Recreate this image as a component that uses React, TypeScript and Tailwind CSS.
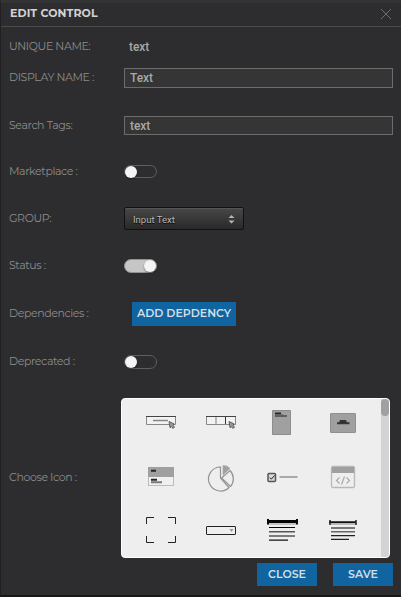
import React from "react";

const ui = "font-['Montserrat','Inter',sans-serif]";

function Row({ label, lift = "pb-px", height, children }: { label: string; lift?: string; height: string; children: React.ReactNode }) {
  return (
    <div className={`flex items-center ${height}`}>
      <div className={`w-[115px] shrink-0 whitespace-nowrap text-[11px] leading-4 font-normal tracking-[-0.4px] text-[#8c8c8c] ${lift}`}>{label}</div>
      {children}
    </div>
  );
}

function Toggle({ on = false, height = "h-[13px]" }: { on?: boolean; height?: string }) {
  return (
    <button
      className={`flex w-[33px] items-center rounded-full border ${height} ${on ? "justify-end border-[#929292] bg-[#c6c6c6]" : "border-[#5f5f61]"}`}
    >
      <span className="size-3 shrink-0 rounded-full bg-[#f4f4f4] shadow-[0_1px_2px_rgba(0,0,0,0.4)]" />
    </button>
  );
}

function TextInput({ value, height }: { value: string; height: string }) {
  return (
    <div className={`flex w-[269px] items-center border border-[#6c6c6c] bg-[#353535] pl-[5px] font-['Roboto',sans-serif] text-[12px] font-medium tracking-[-0.1px] text-[#a8a8a8] ${height}`}>
      {value}
    </div>
  );
}

function Pointer({ x, y }: { x: number; y: number }) {
  return <path transform={`translate(${x} ${y})`} d="M0 0L5 2.3L4 3.6L5.5 5.5L4 7L2.5 5.2L1 6.2Z" fill="#999" stroke="#4a4a4a" strokeWidth=".8" />;
}

const icons: React.ReactNode[] = [
  <>
    <path d="M1.5 8.5h29v8h-29z" fill="#f2f2f2" stroke="#888" />
    <path d="M1 8.5h30" stroke="#444" />
    <path d="M8 12.500h15" stroke="#888" strokeWidth="1.500" />
    <Pointer x={24} y={13.5} />
  </>,
  <>
    <path d="M1.5 8.5h29v8h-29z" fill="#f2f2f2" stroke="#888" />
    <path d="M1 8.5h30" stroke="#444" />
    <path d="M11 9v7" stroke="#999" strokeWidth="1.3" />
    <path d="M20.500 9v7" stroke="#333" />
    <Pointer x={24} y={13.5} />
  </>,
  <>
    <path d="M4.5 2.500h18v24h-18z" fill="#a0a0a0" stroke="#8d8d8d" />
    <path d="M7 4.500h6v2H7z" fill="#252525" />
    <path d="M7 8h12" stroke="#484848" strokeWidth="1.500" />
    <path d="M8 6.800h7" stroke="#666" />
  </>,
  <>
    <rect x="2.500" y="5.500" width="25" height="19" rx=".5" fill="#a0a0a0" stroke="#8f8f8f" />
    <path d="M12 12h6l1 2.300h2.500v2H9v-2h2z" fill="#343434" />
  </>,
  <>
    <rect x="3.500" y="7.500" width="25" height="18" fill="#f0f0f0" stroke="#bbb" />
    <path d="M3 7h26v10H3z" fill="#a0a0a0" />
    <path d="M6 10.800h5" stroke="#252525" strokeWidth="2" />
    <path d="M6 19.800h6" stroke="#252525" strokeWidth="2" />
    <path d="M6 22.300h11" stroke="#777" strokeWidth="2" />
  </>,
  <>
    <path d="M15.500 7A12 12 0 1 0 24 27.500L15.500 18z" fill="#eee" stroke="#939393" strokeWidth="1.200" />
    <path d="M16.500 18L25 10.500A12 12 0 0 1 25.500 26.500z" fill="#eee" stroke="#939393" strokeWidth="1.200" />
    <path d="M18 5.500Q22 5 25 8.500L18 15z" fill="#a0a0a0" stroke="#aaa" strokeWidth=".7" />
  </>,
  <>
    <rect x="0" y="13.500" width="7.500" height="8" rx="1" fill="#d8d8d8" stroke="#555" strokeWidth="1.500" />
    <path d="M1.800 17.500l1.500 1.700 3.200-3.700" fill="none" stroke="#222" />
    <path d="M11.500 17h18" stroke="#a8a8a8" strokeWidth="2" />
  </>,
  <>
    <rect x="3.500" y="6.500" width="23" height="21" rx="1.500" fill="#eee" stroke="#b8b8b8" strokeWidth="1.300" />
    <path d="M4 7h22v6H4z" fill="#9f9f9f" />
    <path d="M11.500 17.500l-3 3 3 3M18.500 17.500l3 3-3 3M16.500 16.500l-3 8" fill="none" stroke="#aaa" strokeWidth="1.200" />
  </>,
  <>
    <path d="M9 2.500H1.500V9M23 2.500h7.500V9M1.500 21v6.500H9M30.500 21v6.500H23" fill="none" stroke="#222" />
  </>,
  <>
    <rect x="1.500" y="11.500" width="29" height="8" rx=".5" fill="#eee" stroke="#222" />
    <path d="M24.500 14h4l-2 3z" fill="#999" />
  </>,
  <>
    <path d="M0 6.500h29" stroke="#050505" strokeWidth="3" />
    <path d="M0 4v5.500M29 4v5.500" stroke="#050505" strokeWidth="2" />
    <path d="M1 9h27" stroke="#b5b5b5" strokeWidth="1.500" />
    <path d="M1 12.500h26" stroke="#050505" />
    <path d="M1 16.700h26M1 21h26" stroke="#555" strokeWidth="1.600" />
    <path d="M1 25.200h19" stroke="#111" strokeWidth="1.300" />
  </>,
  <>
    <path d="M1 7.300h27" stroke="#111" strokeWidth="2" />
    <path d="M2 5v5M28 5v5" stroke="#222" strokeWidth="1.500" />
    <path d="M3 9.500h24" stroke="#bbb" />
    <path d="M3 13h24" stroke="#777" strokeWidth="1.800" />
    <path d="M3 16.800h24" stroke="#666" strokeWidth="1.500" />
    <path d="M3 20.600h24M3 24.400h18" stroke="#222" strokeWidth="1.200" />
  </>,
];

function Icon({ index }: { index: number }) {
  return (
    <svg width="32" height="32" viewBox="0 0 32 32" className="overflow-visible">
      {icons[index]}
    </svg>
  );
}

export default function App() {
  return (
    <div className={`h-[597px] w-[401px] overflow-hidden border-t-[3px] border-b-2 border-l border-t-[#333] border-b-[#171719] border-l-[#202022] bg-[#2d2d2f] ${ui}`}>
      <header className="flex h-6 items-center justify-between border-b border-[#4b4b4d] pr-[9px] pl-[9px]">
        <h1 className="pb-[3px] text-[11px] leading-4 font-bold tracking-[0.09px] whitespace-nowrap text-[#d2d2d2]">EDIT CONTROL</h1>
        <svg className="-mt-0.5" width="12" height="12" viewBox="0 0 12 12" stroke="#747476" strokeWidth=".9">
          <path d="M1 1l10 10M11 1L1 11" />
        </svg>
      </header>
      <main className="pl-2">
        <Row label="UNIQUE NAME:" lift="pb-0.5" height="h-10">
          <span className="pl-[5px] font-['Roboto',sans-serif] text-[12px] font-medium tracking-[-0.1px] text-[#a8a8a8]">text</span>
        </Row>
        <Row label="DISPLAY NAME :" lift="pb-0.5" height="h-[22px]"><TextInput value="Text" height="h-5" /></Row>
        <Row label="Search Tags:" height="h-[73px]"><TextInput value="text" height="h-[19px]" /></Row>
        <Row label="Marketplace :" lift="pb-0.5" height="h-[19px]"><Toggle /></Row>
        <Row label="GROUP:" height="h-[75px]">
          <div className="flex h-[23px] w-[120px] items-center justify-between rounded-[2px] border border-[#111] bg-linear-to-b from-[#484848] to-[#292929] pt-0.5 pr-2 pl-2 text-[#b8b8b8] shadow-[inset_0_1px_0_#555]">
            <span className="pt-px font-['Roboto',sans-serif] text-[9.5px] [text-shadow:0_1px_1px_#000]">Input Text</span>
            <svg width="7" height="9" viewBox="0 0 7 9" fill="#b5b5b5"><path d="M3.500 0L6.500 3H.5zM.5 5.500h6L3.500 8.500z" /></svg>
          </div>
        </Row>
        <Row label="Status :" lift="pb-[3px]" height="h-5"><Toggle on height="h-3.5" /></Row>
        <Row label="Dependencies :" lift="pb-[3px]" height="h-[76px]">
          <button className="ml-2 h-6 w-[104px] bg-[#10649f] pb-px text-[11px] font-semibold whitespace-nowrap text-[#d3dfe7]">ADD DEPDENCY</button>
        </Row>
        <Row label="Deprecated :" lift="pb-[3px]" height="h-5"><Toggle height="h-3.5" /></Row>
        <div className="mt-[26px]">
          <Row label="Choose Icon :" lift="pb-[3px]" height="h-40">
            <div className="-ml-[3px] flex h-40 w-[269px] overflow-hidden rounded-[4px] border border-white bg-[#eee]">
              <div className="grid h-[158px] w-[259px] shrink-0 grid-cols-[60px_63px_60px_60px] grid-rows-[52px_55px_42px] pt-[9px] pl-[23px]">
                {icons.map((_, i) => <Icon key={i} index={i} />)}
              </div>
              <div className="w-2 shrink-0 bg-[#d3d3d3]"><div className="h-[17px] rounded-full bg-[#a0a0a0]" /></div>
            </div>
          </Row>
        </div>
      </main>
      <footer className="mt-[5px] flex justify-end gap-4 pr-2 text-[11px] font-semibold text-[#d3dfe7]">
        <button className="h-[23px] w-[60px] bg-[#10649f] pb-px">CLOSE</button>
        <button className="h-[23px] w-[60px] bg-[#10649f] pb-px">SAVE</button>
      </footer>
    </div>
  );
}
